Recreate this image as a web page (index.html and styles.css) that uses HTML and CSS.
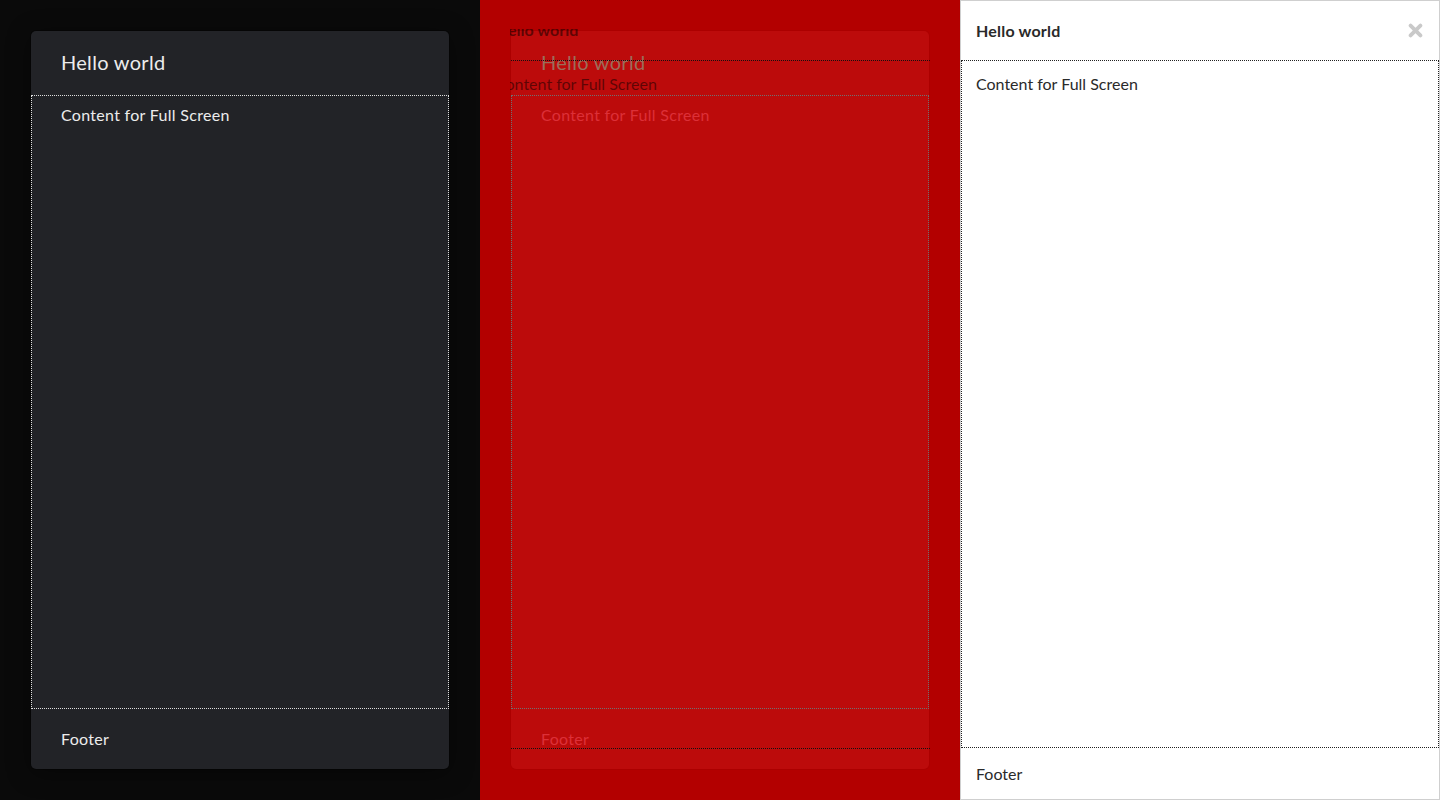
FILE: index.html
```html
<!DOCTYPE html>
<html lang="en">
<head>
<meta charset="utf-8">
<title>Full Screen Modal</title>
<link rel="stylesheet" href="styles.css">
</head>
<body>
<div class="screen">
  <section class="panel panel-dark">
    <div class="card">
      <header class="card-head">Hello world</header>
      <div class="card-body">Content for Full Screen</div>
      <footer class="card-foot">Footer</footer>
    </div>
  </section>

  <section class="panel panel-red">
    <div class="card card-red">
      <header class="card-head">Hello world</header>
      <div class="card-body">Content for Full Screen</div>
      <footer class="card-foot">Footer</footer>
    </div>
    <div class="ghost-clip">
      <div class="ghost">
        <div class="ghost-head">Hello world</div>
        <div class="ghost-body">Content for Full Screen</div>
      </div>
    </div>
  </section>

  <section class="panel panel-light">
    <header class="fs-head">
      <span class="fs-title">Hello world</span>
      <button class="fs-close" aria-label="Close">
        <svg width="15" height="15" viewBox="0 0 15 15"><path d="M2.6 2.6 L12.4 12.4 M12.4 2.6 L2.6 12.4" stroke="currentColor" stroke-width="3.8" stroke-linecap="round"/></svg>
      </button>
    </header>
    <div class="fs-body">Content for Full Screen</div>
    <footer class="fs-foot">Footer</footer>
  </section>
</div>
</body>
</html>
```

FILE: styles.css
```css
* { box-sizing: border-box; }

html, body {
  margin: 0;
  padding: 0;
}

body {
  font-family: Lato, "Liberation Sans", sans-serif;
  font-size: 16px;
  line-height: 24px;
}

.screen {
  display: grid;
  grid-template-columns: 480px 480px 480px;
  width: 1440px;
  height: 800px;
  overflow: hidden;
}

.panel {
  height: 800px;
  position: relative;
}

/* ---------- dark card ---------- */
.panel-dark {
  background: #0a0a0a;
  padding: 31px;
}

.card {
  height: 738px;
  display: flex;
  flex-direction: column;
  background: #222327;
  border-radius: 5px;
  box-shadow: 0 0 0 1px rgba(0, 0, 0, 0.35), 0 4px 24px rgba(0, 0, 0, 0.4);
  color: #ececec;
  letter-spacing: 0.3px;
}

.card-head {
  height: 64px;
  flex: none;
  display: flex;
  align-items: center;
  padding: 0 30px 3px;
  font-size: 20px;
  line-height: 24px;
}

.card-body {
  flex: 1;
  padding: 7px 29px;
  border: 1px dotted rgba(255, 255, 255, 0.85);
}

.card-foot {
  height: 60px;
  flex: none;
  display: flex;
  align-items: center;
  padding: 0 30px;
}

/* ---------- red card ---------- */
.panel-red {
  background: #b30000;
  padding: 31px;
}

.card-red {
  background: #bc0b0b;
  box-shadow: 0 0 0 1px rgba(0, 0, 0, 0.04);
  color: #dc3038;
}

.card-red .card-head {
  color: #9c6d5a;
}

.card-red .card-body {
  border-color: #707070;
}

.ghost-clip {
  position: absolute;
  left: 30px;
  top: 29px;
  width: 420px;
  height: 742px;
  overflow: hidden;
  pointer-events: none;
}

.ghost {
  position: absolute;
  left: -30px;
  top: -29px;
  width: 480px;
  height: 800px;
  display: flex;
  flex-direction: column;
  color: rgba(0, 0, 0, 0.5);
}

.ghost-head {
  height: 60px;
  flex: none;
  display: flex;
  align-items: center;
  padding: 0 16px;
  font-weight: 700;
}

.ghost-body {
  height: 689px;
  flex: none;
  padding: 11px 15px;
  border-top: 1px dotted #111;
  border-bottom: 1px dotted #111;
}

/* ---------- light full screen ---------- */
.panel-light {
  background: #fff;
  border: 1px solid #cfcfcf;
  display: flex;
  flex-direction: column;
  color: #2a2a2a;
}

.fs-head {
  height: 59px;
  flex: none;
  display: flex;
  align-items: center;
  justify-content: space-between;
  padding: 0 15px;
}

.fs-title {
  font-weight: 700;
  letter-spacing: 0.2px;
}

.fs-close {
  border: 0;
  background: none;
  padding: 0;
  margin-right: 1px;
  color: #c9c9c9;
  display: flex;
  align-items: center;
  cursor: pointer;
}

.fs-body {
  flex: 1;
  border: 1px dotted #222;
  padding: 11px 14px;
}

.fs-foot {
  height: 51px;
  flex: none;
  display: flex;
  align-items: center;
  padding: 0 15px;
}
```
